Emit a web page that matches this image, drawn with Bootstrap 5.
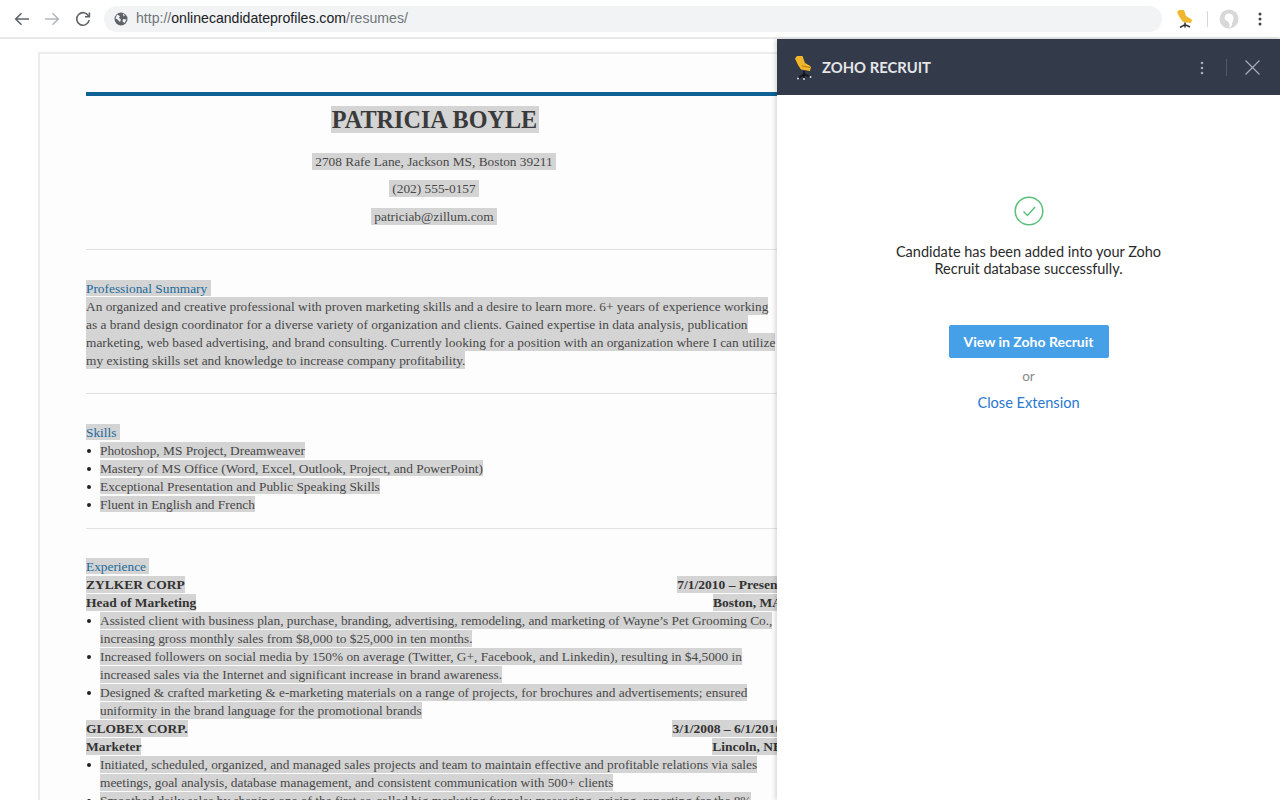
<!DOCTYPE html>
<html lang="en">
<head>
<meta charset="utf-8">
<title>Zoho Recruit</title>
<link href="https://cdn.jsdelivr.net/npm/bootstrap@5.3.0/dist/css/bootstrap.min.css" rel="stylesheet">
<style>
html,body{height:800px;overflow:hidden;background:#fff}
body{position:relative;font-family:"Liberation Serif",serif}
.toolbar{height:39px;border-bottom:2px solid #e9e9ea;background:#fff;padding:1px 0 0 12px}
.tb-btn{width:20px;height:20px;flex:none}
.fwd{margin-left:10px}
.rel{margin-left:11px}
.omni{width:1058px;height:26px;background:#f1f3f4;border-radius:13px;margin-left:11px;padding-left:10px;font-family:"Liberation Sans",sans-serif;font-size:14.1px;color:#70757a}
.omni b{font-weight:400;color:#202124}
.globe{margin-right:8px;flex:none}
.tb-right{margin-left:15px}
.tb-sep{width:1px;height:16px;background:#d5d7d9;margin-left:14px}
.avatar{margin-left:11px}
.tb-dots{margin-left:19px}
.sheet{margin:13px 0 0 38px;width:794px;height:748px;overflow:hidden;border:2px solid #ececed;border-bottom:0;background:#fdfdfe;padding:38px 46px 0 46px;color:#484848;font-size:13.35px}
.topbar{height:4px;background:#0f6296}
.hl{background:#d4d4d4}
.ln{line-height:18px;height:18px;white-space:nowrap}
.ln .hl{display:inline-block;height:17px;line-height:18px;vertical-align:top;margin-top:.5px}
.ln.tall .hl{height:18px;line-height:19px;margin-top:0}
.ln.thin .hl{height:16px;line-height:17px;margin-top:1px}
.nm{height:28px;margin-top:9px;text-align:center;font-size:24.2px;font-weight:700;line-height:28px;color:#3a3a3a;white-space:nowrap}
.nm .hl{display:inline-block;height:27px;line-height:27px;padding:0 2px 0 1px;margin-top:1px;vertical-align:top}
.contact{text-align:center;height:27.5px;line-height:18px;padding-top:5px;padding-right:2px}
.contact.c1{margin-top:14.5px}
.contact .hl{display:inline-block;height:17px;line-height:18px}
.rule{height:1px;background:#e2e2e2}
.r1{margin-top:19px}.r2{margin-top:24px}.r3{margin-top:15px}
.s1{margin-top:29px}.s2{margin-top:29px}.s3{margin-top:28px}
.h-sec{color:#1c6a9c}
.li{padding-left:14px;position:relative}
.li.first::before{content:"";position:absolute;left:1px;top:8px;width:4px;height:4px;border-radius:50%;background:#222}
.co{font-weight:700;color:#333;font-size:13.5px;margin-right:2px}
.panel{position:absolute;left:777px;top:39px;width:503px;height:761px;background:#fff;box-shadow:-2px 0 4px rgba(0,0,0,.14);font-family:Lato,sans-serif}
.phead{height:56px;background:#333a4a;color:#e4e5e8;padding:1px 20px 0 18px;font-size:14.8px;font-weight:700}
.phead .ttl{margin-left:9px}
.vsep{width:1px;height:17px;background:#535a69;margin:0 18px 0 22px}
.pbody{padding-top:101px}
.msg{font-size:14.5px;line-height:17px;color:#2a2a2a;margin-top:17px}
.vbtn{margin-top:48px;width:160px;height:33px;padding:0;background:#46a0e8;border-color:#46a0e8;border-radius:2px;font-size:14px;font-weight:700;line-height:31px;color:#fff}
.ortxt{font-size:13.5px;color:#8a8a8a;margin-top:10px;line-height:17px}
.closel{font-size:14.6px;color:#2a79cf;margin-top:9px;line-height:17px;text-decoration:none;display:inline-block}
</style>
</head>
<body>
<div class="toolbar d-flex align-items-center">
  <svg class="tb-btn" viewBox="0 0 20 20" fill="none" stroke="#5f6368" stroke-width="1.6"><path d="M17 10H4M9.500 4.200 3.700 10l5.800 5.800"/></svg>
  <svg class="tb-btn fwd" viewBox="0 0 20 20" fill="none" stroke="#b4b7ba" stroke-width="1.6"><path d="M3 10h13M10.500 4.200l5.800 5.800-5.800 5.800"/></svg>
  <svg class="tb-btn rel" viewBox="0 0 20 20" fill="none" stroke="#5f6368" stroke-width="1.6"><path d="M15.600 7a6.300 6.300 0 1 0 .6 4.200"/><path d="M16.400 3.400v4.400H12"/></svg>
  <div class="omni d-flex align-items-center">
    <svg width="14" height="14" viewBox="0 0 14 14" class="globe"><circle cx="7" cy="7" r="6.500" fill="#5f6368"/><path d="M3 2.500 6 4 5 6l2 1.500L6 10 3.500 7.500l-2-1zM9 1.500l2 1.500-1.500 1.500zM9 7l3.500.5-2 3.500-2-1.500z" fill="#f1f3f4"/></svg>
    <span>http://<b>onlinecandidateprofiles.com</b>/resumes/</span>
  </div>
  <div class="tb-right d-flex align-items-center">
    <svg width="16" height="18" viewBox="0 0 16 18"><path d="M0 2 2 0h5l2 6 5 3 1 1-1 3-8-1-3-4z" fill="#f1b72c"/><path d="M8 12.500v2M3 17.500l5-3 5 2.500M8 14.500v3" stroke="#333" stroke-width="1.500" fill="none"/></svg>
    <span class="tb-sep"></span>
    <svg width="20" height="20" viewBox="0 0 20 20" class="avatar"><circle cx="10" cy="10" r="9.500" fill="#d8d8d8"/><path d="M5.500 9a4.500 4.500 0 0 1 9 0c0 3-1.500 4-1.500 6 0 1.500-1 3.500-3 3.500 1-2.500.5-4-.5-5.500C8 11.500 5.500 11 5.500 9z" fill="#fff"/></svg>
    <svg width="4" height="14" viewBox="0 0 4 14" class="tb-dots" fill="#444"><circle cx="2" cy="2" r="1.500"/><circle cx="2" cy="7" r="1.500"/><circle cx="2" cy="12" r="1.500"/></svg>
  </div>
</div>

<div class="sheet">
  <div class="topbar"></div>
  <div class="nm"><span class="hl">PATRICIA BOYLE</span></div>
  <div class="contact c1"><span class="hl">&nbsp;2708 Rafe Lane, Jackson MS, Boston 39211&nbsp;</span></div>
  <div class="contact"><span class="hl">&nbsp;(202) 555-0157&nbsp;</span></div>
  <div class="contact"><span class="hl">&nbsp;patriciab@zillum.com&nbsp;</span></div>
  <div class="rule r1"></div>
  <div class="ln thin h-sec s1"><span class="hl">Professional Summary&nbsp;</span></div>
  <div class="ln tall"><span class="hl">An organized and creative professional with proven marketing skills and a desire to learn more. 6+ years of experience working</span></div>
  <div class="ln tall"><span class="hl">as a brand design coordinator for a diverse variety of organization and clients. Gained expertise in data analysis, publication</span></div>
  <div class="ln tall"><span class="hl">marketing, web based advertising, and brand consulting. Currently looking for a position with an organization where I can utilize</span></div>
  <div class="ln tall"><span class="hl">my existing skills set and knowledge to increase company profitability.</span></div>
  <div class="rule r2"></div>
  <div class="ln thin h-sec s2"><span class="hl">Skills&nbsp;</span></div>
  <div class="ln thin li first"><span class="hl">Photoshop, MS Project, Dreamweaver</span></div>
  <div class="ln thin li first"><span class="hl">Mastery of MS Office (Word, Excel, Outlook, Project, and PowerPoint)</span></div>
  <div class="ln thin li first"><span class="hl">Exceptional Presentation and Public Speaking Skills</span></div>
  <div class="ln thin li first"><span class="hl">Fluent in English and French</span></div>
  <div class="rule r3"></div>
  <div class="ln thin h-sec s3"><span class="hl">Experience&nbsp;</span></div>
  <div class="ln co d-flex justify-content-between"><span class="hl">ZYLKER CORP</span><span class="hl">7/1/2010 – Present</span></div>
  <div class="ln co d-flex justify-content-between"><span class="hl">Head of Marketing</span><span class="hl">Boston, MA</span></div>
  <div class="ln li first"><span class="hl">Assisted client with business plan, purchase, branding, advertising, remodeling, and marketing of Wayne’s Pet Grooming Co.,</span></div>
  <div class="ln li"><span class="hl">increasing gross monthly sales from $8,000 to $25,000 in ten months.</span></div>
  <div class="ln li first"><span class="hl">Increased followers on social media by 150% on average (Twitter, G+, Facebook, and Linkedin), resulting in $4,5000 in</span></div>
  <div class="ln li"><span class="hl">increased sales via the Internet and significant increase in brand awareness.</span></div>
  <div class="ln li first"><span class="hl">Designed &amp; crafted marketing &amp; e-marketing materials on a range of projects, for brochures and advertisements; ensured</span></div>
  <div class="ln li"><span class="hl">uniformity in the brand language for the promotional brands</span></div>
  <div class="ln co d-flex justify-content-between"><span class="hl">GLOBEX CORP.</span><span class="hl">3/1/2008 – 6/1/2010</span></div>
  <div class="ln co d-flex justify-content-between"><span class="hl">Marketer</span><span class="hl">Lincoln, NE</span></div>
  <div class="ln li first"><span class="hl">Initiated, scheduled, organized, and managed sales projects and team to maintain effective and profitable relations via sales</span></div>
  <div class="ln li"><span class="hl">meetings, goal analysis, database management, and consistent communication with 500+ clients</span></div>
  <div class="ln li first"><span class="hl">Smoothed daily sales by shaping one of the first so-called big marketing funnels; messaging, pricing, reporting for the 8%</span></div>
</div>

<aside class="panel">
  <div class="phead d-flex align-items-center">
    <svg width="18" height="24" viewBox="0 0 18 24"><path d="M0 2.500 2 0h5.500L10 7l4.500 2.500L16 11l-1 4-9-1.500-3-4.500z" fill="#f1b72c"/><path d="M7 10l8 1.500" stroke="#b27c10" stroke-width="1.200"/><path d="M9 15v3M3.500 22 9 18l6 3M9 18v4" stroke="#14161b" stroke-width="1.700" fill="none"/><circle cx="3" cy="22.500" r="1" fill="#d9dbe0"/><circle cx="9" cy="23" r="1" fill="#d9dbe0"/><circle cx="15.500" cy="21" r="1" fill="#d9dbe0"/></svg>
    <span class="ttl">ZOHO RECRUIT</span>
    <div class="ms-auto d-flex align-items-center">
      <svg width="4" height="14" viewBox="0 0 4 14" fill="#a9adb6"><circle cx="2" cy="2" r="1.300"/><circle cx="2" cy="7" r="1.300"/><circle cx="2" cy="12" r="1.300"/></svg>
      <span class="vsep"></span>
      <svg width="15" height="15" viewBox="0 0 15 15" stroke="#a9adb6" stroke-width="1.200"><path d="M.5.5l14 14M14.500.5l-14 14"/></svg>
    </div>
  </div>
  <div class="pbody text-center">
    <svg width="30" height="30" viewBox="0 0 30 30" fill="none" stroke="#5cc07c" class="d-block mx-auto"><circle cx="15" cy="15" r="13.800" stroke-width="1.500"/><path d="M9.500 15.500l4 4 7.500-8.500" stroke-width="1.500"/></svg>
    <div class="msg">Candidate has been added into your Zoho<br>Recruit database successfully.</div>
    <button type="button" class="btn btn-primary vbtn">View in Zoho Recruit</button>
    <div class="ortxt">or</div>
    <a href="#" class="closel">Close Extension</a>
  </div>
</aside>
<script src="https://cdn.jsdelivr.net/npm/bootstrap@5.3.0/dist/js/bootstrap.bundle.min.js"></script>
</body>
</html>
